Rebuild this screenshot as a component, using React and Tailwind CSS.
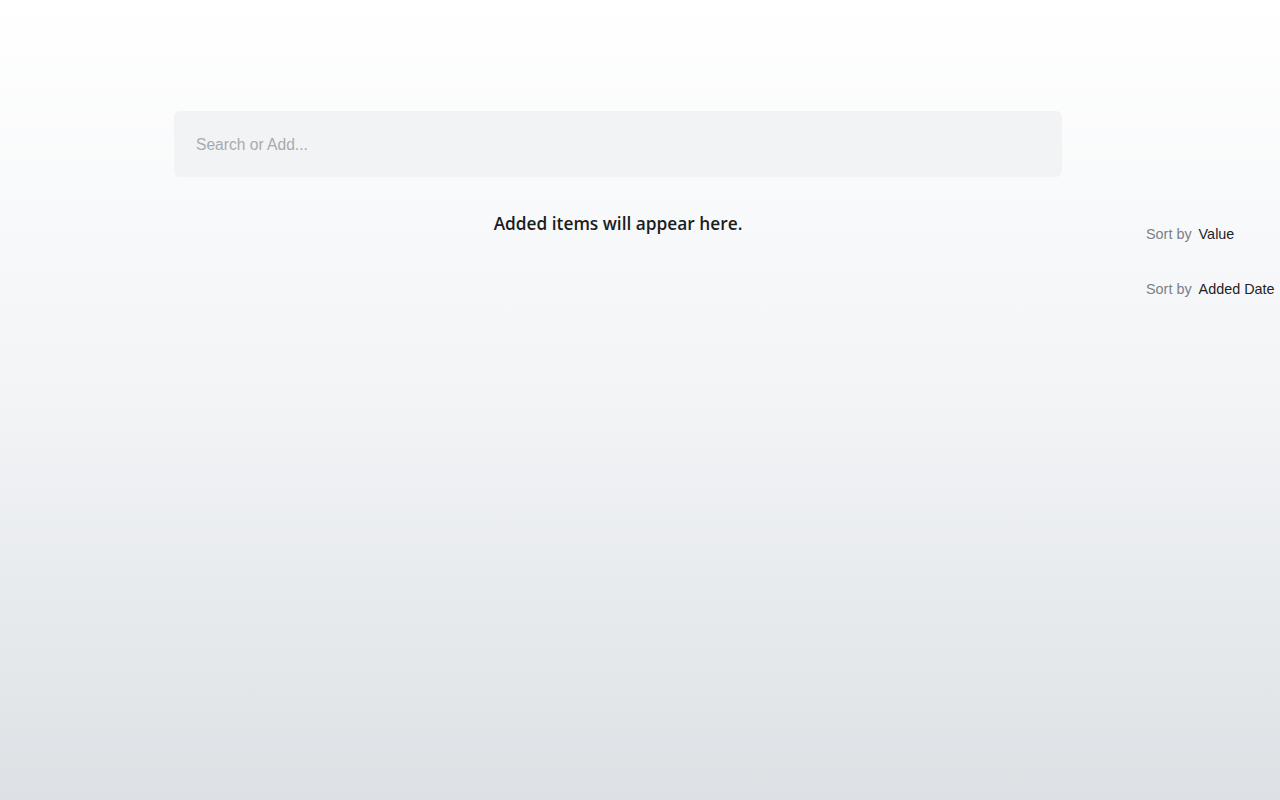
import React, { useState } from 'react';

const sortOptions = [
  { label: 'Sort by', value: 'Value' },
  { label: 'Sort by', value: 'Added Date' },
];

const App = () => {
  const [query, setQuery] = useState('');
  const [items] = useState([]);

  return (
    <div className="min-h-screen w-full bg-gradient-to-b from-white via-[#f2f4f6] to-[#dde1e5] font-['Liberation_Sans',Arial,sans-serif]">
      <div className="flex pt-[111px]">
        {/* main column */}
        <div className="ml-[174px] w-[888px] shrink-0">
          <input
            value={query}
            onChange={(e) => setQuery(e.target.value)}
            placeholder="Search or Add..."
            className="h-[66px] w-full rounded-md bg-[#f1f3f5] px-[22px] pt-[2px] text-[15.6px] text-gray-800 outline-none placeholder:text-[#a6abb1]"
          />
          {items.length === 0 && (
            <p className="mt-[35px] text-center font-['Open_Sans',sans-serif] text-[17.3px] font-semibold leading-[24px] text-[#1a1d21]">
              Added items will appear here.
            </p>
          )}
        </div>

        {/* sort controls */}
        <div className="ml-[84px] mt-[113px] flex flex-col gap-[33px] whitespace-nowrap text-[14.4px]">
          {sortOptions.map((opt) => (
            <div key={opt.value} className="flex items-center gap-[7px]">
              <span className="text-[#7b8088]">{opt.label}</span>
              <span className="text-[#1f2328]">{opt.value}</span>
            </div>
          ))}
        </div>
      </div>
    </div>
  );
};

export default App;
